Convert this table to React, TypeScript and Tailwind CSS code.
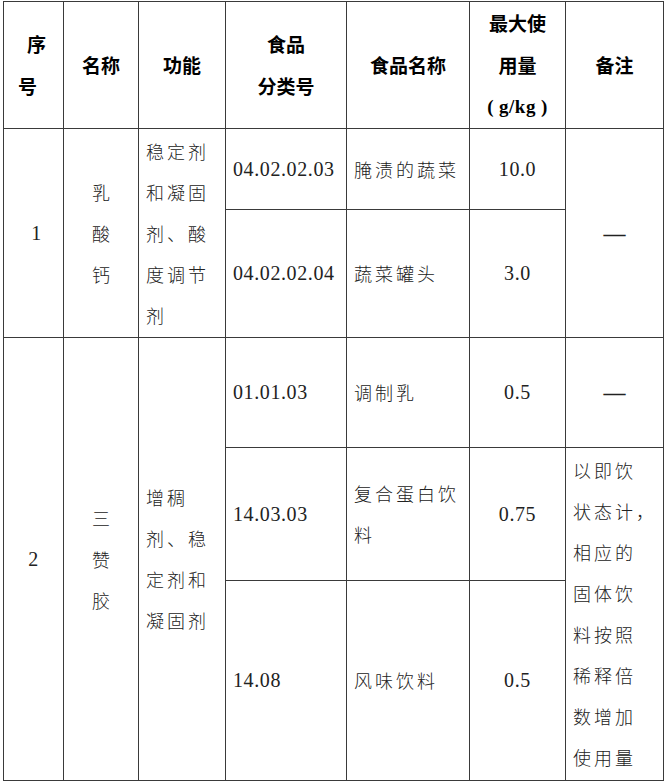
const serif = "font-['Liberation_Serif','Noto_Sans_CJK_SC',serif]"

type Line = string[]

function Lines({ lines, className = "" }: { lines: Line; className?: string }) {
  return (
    <div className={className}>
      {lines.map((l, i) => (
        <div key={i}>{l}</div>
      ))}
    </div>
  )
}

// long dash used in the 备注 column
function Dash() {
  return <span className={`inline-block text-[22px] font-bold text-[#222] ${serif}`}>—</span>
}

const td = "border border-[#3a3a3a] p-0 align-middle"
const cn = "text-[18px] tracking-[3px] leading-[41px] text-[#222] font-['Noto_Sans_CJK_SC',sans-serif] font-light"
const num = `text-[20px] leading-[41px] tracking-[0.6px] text-[#222] ${serif}`

export default function App() {
  return (
    <div className="bg-white w-[666px] h-[784px] pt-[1px] pl-[3px]">
      <table className="table-fixed border-collapse w-[661px]">
        <colgroup>
          <col className="w-[60px]" />
          <col className="w-[75px]" />
          <col className="w-[87px]" />
          <col className="w-[121px]" />
          <col className="w-[123px]" />
          <col className="w-[96px]" />
          <col className="w-[98px]" />
        </colgroup>
        <thead>
          <tr className="h-[127px] text-[19px] font-bold leading-[42px] text-black font-['Noto_Sans_CJK_SC',sans-serif]">
            <th className={`${td} text-left pl-[14px]`}>
              <div className="pl-[9px]">序</div>
              <div>号</div>
            </th>
            <th className={`${td} text-center`}>名称</th>
            <th className={`${td} text-center`}>功能</th>
            <th className={`${td} text-center`}>
              <div>食品</div>
              <div>分类号</div>
            </th>
            <th className={`${td} text-center`}>食品名称</th>
            <th className={`${td} text-center`}>
              <div>最大使</div>
              <div>用量</div>
              <div className={`${serif} tracking-[0.5px]`}>
                (<span className="px-[5px]">g/kg</span>)
              </div>
            </th>
            <th className={`${td} text-center`}>备注</th>
          </tr>
        </thead>
        <tbody>
          <tr className="h-[81px]">
            <td rowSpan={2} className={`${td} text-center ${num} pl-[6px]`}>1</td>
            <td rowSpan={2} className={`${td} text-center ${cn} pl-[3px]`}>
              <Lines lines={["乳", "酸", "钙"]} />
            </td>
            <td rowSpan={2} className={`${td} pl-[7px] ${cn}`}>
              <Lines lines={["稳定剂", "和凝固", "剂、酸", "度调节", "剂"]} />
            </td>
            <td className={`${td} pl-[7px] ${num}`}>04.02.02.03</td>
            <td className={`${td} pl-[7px] ${cn}`}>腌渍的蔬菜</td>
            <td className={`${td} text-center ${num}`}>10.0</td>
            <td rowSpan={2} className={`${td} text-center`}>
              <Dash />
            </td>
          </tr>
          <tr className="h-[128px]">
            <td className={`${td} pl-[7px] ${num}`}>04.02.02.04</td>
            <td className={`${td} pl-[7px] ${cn}`}>蔬菜罐头</td>
            <td className={`${td} text-center ${num}`}>3.0</td>
          </tr>
          <tr className="h-[110px]">
            <td rowSpan={3} className={`${td} text-center ${num}`}>2</td>
            <td rowSpan={3} className={`${td} text-center ${cn} pl-[3px]`}>
              <Lines lines={["三", "赞", "胶"]} />
            </td>
            <td rowSpan={3} className={`${td} pl-[7px] ${cn}`}>
              <Lines lines={["增稠", "剂、稳", "定剂和", "凝固剂"]} />
            </td>
            <td className={`${td} pl-[7px] ${num}`}>01.01.03</td>
            <td className={`${td} pl-[7px] ${cn}`}>调制乳</td>
            <td className={`${td} text-center ${num}`}>0.5</td>
            <td className={`${td} text-center`}>
              <Dash />
            </td>
          </tr>
          <tr className="h-[133px]">
            <td className={`${td} pl-[7px] ${num}`}>14.03.03</td>
            <td className={`${td} pl-[7px] ${cn}`}>
              <Lines lines={["复合蛋白饮", "料"]} />
            </td>
            <td className={`${td} text-center ${num}`}>0.75</td>
            <td rowSpan={2} className={`${td} pl-[7px] ${cn}`}>
              <Lines
                lines={["以即饮", "状态计，", "相应的", "固体饮", "料按照", "稀释倍", "数增加", "使用量"]}
                className="whitespace-nowrap"
              />
            </td>
          </tr>
          <tr className="h-[200px]">
            <td className={`${td} pl-[7px] ${num}`}>14.08</td>
            <td className={`${td} pl-[7px] ${cn}`}>风味饮料</td>
            <td className={`${td} text-center ${num}`}>0.5</td>
          </tr>
        </tbody>
      </table>
    </div>
  )
}
